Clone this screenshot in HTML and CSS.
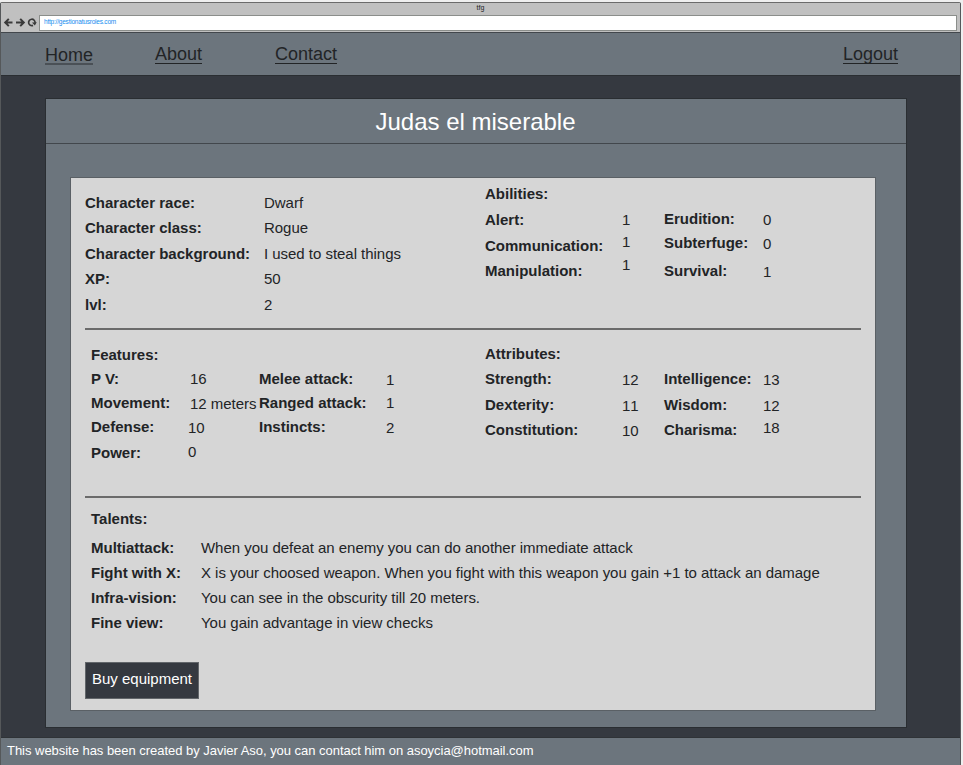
FILE: index.html
```html
<!DOCTYPE html>
<html lang="en">
<head>
<meta charset="utf-8">
<title>tfg</title>
<link rel="stylesheet" href="styles.css">
</head>
<body>
<div class="window">
  <header class="chrome">
    <div class="tab-title">tfg</div>
    <div class="toolbar">
      <svg class="controls" width="38" height="14" viewBox="0 0 38 14" fill="none" stroke="#3a3a3a" stroke-width="2">
        <path d="M12.500 6.500H5.500M8.800 2.900L5.200 6.500l3.600 3.600"/>
        <path d="M16 6.500h7.500M20.200 2.900L23.800 6.500l-3.600 3.600"/>
        <path d="M33 9.400A3.200 3.200 0 1 1 35 6.800" stroke-width="1.700"/>
        <path d="M36.800 6.200l-2 3.200-2.800-2.800z" fill="#3a3a3a" stroke="none"/>
      </svg>
      <div class="address">http://gestionatusroles.com</div>
    </div>
  </header>
  <nav class="nav">
    <a class="link home">Home</a>
    <a class="link about">About</a>
    <a class="link contact">Contact</a>
    <a class="link logout">Logout</a>
  </nav>
  <main class="main">
    <section class="panel">
      <h1 class="title">Judas el miserable</h1>
      <div class="card">
        <div class="section summary">
          <div class="stack bold profile"><span>Character race:</span><span>Character class:</span><span class="short">Character background:</span><span>XP:</span><span>lvl:</span></div>
          <div class="stack profile"><span>Dwarf</span><span>Rogue</span><span class="short">I used to steal things</span><span>50</span><span>2</span></div>
          <div class="stack bold abilities"><span>Abilities:</span><span>Alert:</span><span>Communication:</span><span>Manipulation:</span></div>
          <div class="stack ability-values"><span>1</span><span>1</span><span>1</span></div>
          <div class="stack bold knowledge"><span>Erudition:</span><span class="short">Subterfuge:</span><span>Survival:</span></div>
          <div class="stack knowledge-values"><span>0</span><span>0</span><span>1</span></div>
        </div>
        <hr class="rule">
        <div class="section stats">
          <div class="stack bold features"><span>Features:</span><span>P V:</span><span>Movement:</span><span>Defense:</span><span>Power:</span></div>
          <div class="stack feature-values"><span class="wide">16</span><span class="wide">12 meters</span><span>10</span><span>0</span></div>
          <div class="stack bold combat"><span>Melee attack:</span><span>Ranged attack:</span><span>Instincts:</span></div>
          <div class="stack combat-values"><span>1</span><span>1</span><span>2</span></div>
          <div class="stack bold attributes"><span>Attributes:</span><span>Strength:</span><span class="short">Dexterity:</span><span>Constitution:</span></div>
          <div class="stack attribute-values"><span>12</span><span>11</span><span>10</span></div>
          <div class="stack bold mind"><span>Intelligence:</span><span>Wisdom:</span><span>Charisma:</span></div>
          <div class="stack mind-values"><span>13</span><span>12</span><span>18</span></div>
        </div>
        <hr class="rule">
        <div class="talents">
          <h2 class="heading">Talents:</h2>
          <dl class="talent-list">
            <dt>Multiattack:</dt><dd>When you defeat an enemy you can do another immediate attack</dd>
            <dt>Fight with X:</dt><dd>X is your choosed weapon. When you fight with this weapon you gain +1 to attack an damage</dd>
            <dt>Infra-vision:</dt><dd>You can see in the obscurity till 20 meters.</dd>
            <dt>Fine view:</dt><dd>You gain advantage in view checks</dd>
          </dl>
        </div>
        <button class="buy" type="button">Buy equipment</button>
      </div>
    </section>
  </main>
  <footer class="footer">This website has been created by Javier Aso, you can contact him on asoycia@hotmail.com</footer>
</div>
</body>
</html>
```
FILE: styles.css
```css
* { box-sizing: border-box; }

body {
  margin: 0;
  height: 765px;
  overflow: hidden;
  background: #efefef;
  color: #222426;
  font: 15px/18px "Liberation Sans", Arial, sans-serif;
}

.window {
  display: flex;
  flex-direction: column;
  width: 961px;
  height: 763px;
  margin-top: 2px;
  border: 1px solid #55585a;
  border-top-color: #6b6b6b;
  border-bottom: 0;
  border-radius: 2px 2px 0 0;
  background: #353940;
}

.chrome { height: 29px; background: #c0c0c0; }
.tab-title { height: 12px; font-size: 7px; line-height: 10px; text-align: center; }
.toolbar { display: flex; align-items: center; height: 16px; padding-right: 3px; }
.controls { flex: none; margin-left: -1px; margin-right: 1px; }
.address {
  flex: 1;
  height: 16px;
  padding-left: 4px;
  border: 1px solid #8b8e8b;
  background: #fff;
  color: #168df0;
  font-size: 6.5px;
  letter-spacing: -0.21px;
  line-height: 12px;
}

.nav {
  display: flex;
  height: 44px;
  padding: 10px 62px 0 44px;
  border-top: 1px solid #42474c;
  border-bottom: 1px solid #2a2e32;
  background: #6c757d;
  font-size: 18px;
  line-height: 22px;
}
.link { height: 21px; border-bottom: 1px solid #222426; }
.home { height: 22px; border-bottom: 2px solid #4a5056; margin-right: 62px; padding-top: 1px; line-height: 22px; }
.about { margin-right: 73px; }
.logout { margin-left: auto; }

.main { flex: 1; padding: 22px 53px 0 44px; }
.panel { height: 630px; border: 1px solid #2a2e32; background: #6c757d; }
.title {
  height: 45px;
  margin: 0;
  padding-right: 1px;
  border-bottom: 1px solid #42474c;
  color: #fff;
  font-size: 24px;
  font-weight: 400;
  line-height: 46px;
  text-align: center;
}
.card {
  width: 806px;
  height: 534px;
  margin: 33px 0 0 24px;
  padding: 0 14px;
  border: 1px solid #5a6065;
  background: #d6d6d6;
}

.section { display: grid; }
.summary { height: 150px; grid-template-columns: 179px 221px 137px 42px 99px 1fr; }
.stats { height: 166px; grid-template-columns: 97px 71px 127px 99px 137px 42px 99px 1fr; padding-left: 6px; }

.stack { display: grid; align-content: start; white-space: nowrap; letter-spacing: -0.03px; font-kerning: none; }
.bold { font-weight: 700; letter-spacing: 0; font-kerning: auto; }
.short { height: 17px; overflow: hidden; }
.profile { padding-top: 16px; grid-template-rows: 25px 26px 25px 26px 18px; }
.abilities { padding-top: 7px; grid-template-rows: 26px 26px 25px 18px; }
.ability-values { padding-top: 33px; grid-template-rows: 22px 23px 18px; }
.knowledge { padding-top: 32px; grid-template-rows: 24px 28px 18px; }
.knowledge-values { padding-top: 33px; grid-template-rows: 24px 28px 18px; }
.features { padding-top: 16px; grid-template-rows: 24px 24px 24px 26px 18px; }
.feature-values { padding-top: 40px; grid-template-rows: 25px 24px 24px 18px; }
.wide { padding-left: 2px; }
.combat { padding-top: 40px; grid-template-rows: 24px 24px 18px; }
.combat-values { padding-top: 41px; grid-template-rows: 23px 25px 18px; }
.attributes { padding-top: 15px; grid-template-rows: 25px 26px 25px 18px; }
.attribute-values { padding-top: 41px; grid-template-rows: 26px 25px 18px; }
.mind { padding-top: 40px; grid-template-rows: 26px 25px 18px; }
.mind-values { padding-top: 41px; grid-template-rows: 26px 22px 18px; }

.rule { height: 2px; margin: 0; border: 0; background: #6b6b6b; }

.talents { height: 164px; padding: 12px 0 0 6px; }
.heading { margin: 0 0 11px; font-size: 15px; line-height: 18px; }
.talent-list {
  display: grid;
  grid-template-columns: 110px 1fr;
  grid-auto-rows: 25px;
  margin: 0;
  white-space: nowrap;
}
.talent-list dt { font-weight: 700; }
.talent-list dd { margin: 0; letter-spacing: -0.033px; }

.buy {
  display: block;
  width: 114px;
  height: 37px;
  padding: 0 0 3px;
  border: 1px solid #62666a;
  background: #353940;
  color: #fff;
  font: inherit;
  white-space: nowrap;
}

.footer {
  height: 28px;
  padding-left: 6px;
  border-top: 1px solid #2f3337;
  background: #6c757d;
  color: #fff;
  font-size: 13px;
  letter-spacing: -0.03px;
  line-height: 25px;
}
```
